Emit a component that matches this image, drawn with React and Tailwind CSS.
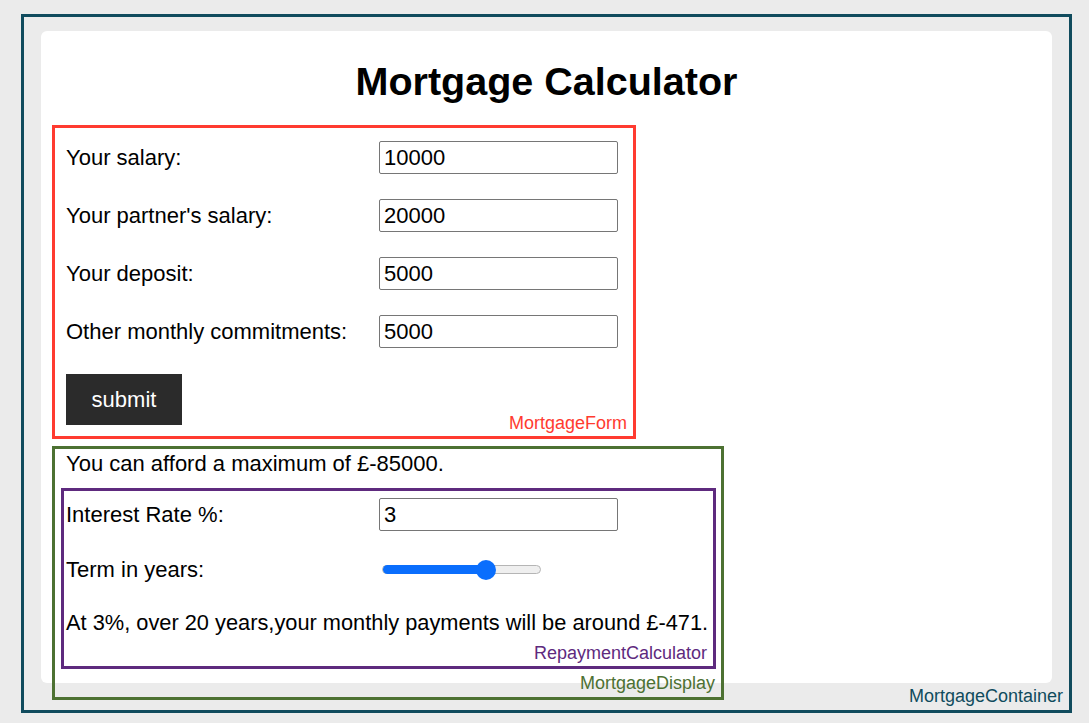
const font = { fontFamily: '"Liberation Sans", Arial, sans-serif' };

function Field({ label, value, labelWidth }) {
    return (
        <div className="flex items-center">
            <div className={labelWidth}>{label}</div>
            <div className="flex h-[33px] w-[239px] items-center rounded-[2px] border border-[#767676] bg-white pl-[4px]">
                {value}
            </div>
        </div>
    );
}

export default function App() {
    return (
        <div
            className="min-h-[723px] bg-[#ebebeb] pl-[21px] pt-[14px] text-[22px] text-black"
            style={font}
        >
            {/* MortgageContainer */}
            <div className="relative h-[699px] w-[1051px] border-[3px] border-[#104b5d] px-[17px] pt-[14px]">
                <div className="h-[652px] rounded-md bg-white pl-[11px] pt-[30px]">
                    <h1 className="mr-[11px] text-center text-[39.5px] font-bold leading-[40px]">
                        Mortgage Calculator
                    </h1>

                    {/* MortgageForm */}
                    <div className="relative mt-[24px] h-[314px] w-[584px] border-[3px] border-[#ff3b30] pl-[11px] pt-[13px]">
                        <div className="flex flex-col gap-[25px]">
                            <Field label="Your salary:" value="10000" labelWidth="w-[313px]" />
                            <Field label="Your partner's salary:" value="20000" labelWidth="w-[313px]" />
                            <Field label="Your deposit:" value="5000" labelWidth="w-[313px]" />
                            <Field label="Other monthly commitments:" value="5000" labelWidth="w-[313px]" />
                        </div>
                        <button className="mt-[26px] h-[51px] w-[116px] bg-[#2b2b2b] text-[22px] text-white">
                            submit
                        </button>
                        <span className="absolute bottom-[-1px] right-[6px] text-[18px] text-[#ff3b30]">
                            MortgageForm
                        </span>
                    </div>

                    {/* MortgageDisplay */}
                    <div className="relative mt-[7px] h-[254px] w-[672px] border-[3px] border-[#4d7132] pl-[6px] pr-[5px] pt-[1px]">
                        <div className="pl-[5px] leading-[28px]">You can afford a maximum of £-85000.</div>

                        {/* RepaymentCalculator */}
                        <div className="relative mt-[10px] h-[181px] w-[655px] border-[3px] border-[#5e2a7e] pl-[2px] pt-[7px]">
                            <Field label="Interest Rate %:" value="3" labelWidth="w-[313px]" />
                            <div className="mt-[22px] flex h-[33px] items-center">
                                <div className="w-[316px]">Term in years:</div>
                                <div className="relative flex h-[9px] w-[159px] items-center rounded-full border border-[#b5b5b5] bg-[#efefef]">
                                    <div className="h-[9px] w-[105px] rounded-full bg-[#0a6efd]" />
                                    <div className="absolute left-[93px] top-[-6px] h-[20px] w-[20px] rounded-full bg-[#0a6efd]" />
                                </div>
                            </div>
                            <div className="mt-[23px] whitespace-nowrap text-[21.8px] leading-[28px]">
                                At 3%, over 20 years,your monthly payments will be around £-471.
                            </div>
                            <span className="absolute bottom-[-1px] right-[6px] text-[18px] text-[#5e2a7e]">
                                RepaymentCalculator
                            </span>
                        </div>
                        <span className="absolute bottom-[0px] right-[6px] text-[18px] text-[#4d7132]">
                            MortgageDisplay
                        </span>
                    </div>
                </div>
                <span className="absolute bottom-[0px] right-[6px] text-[18px] text-[#104b5d]">
                    MortgageContainer
                </span>
            </div>
        </div>
    );
}
